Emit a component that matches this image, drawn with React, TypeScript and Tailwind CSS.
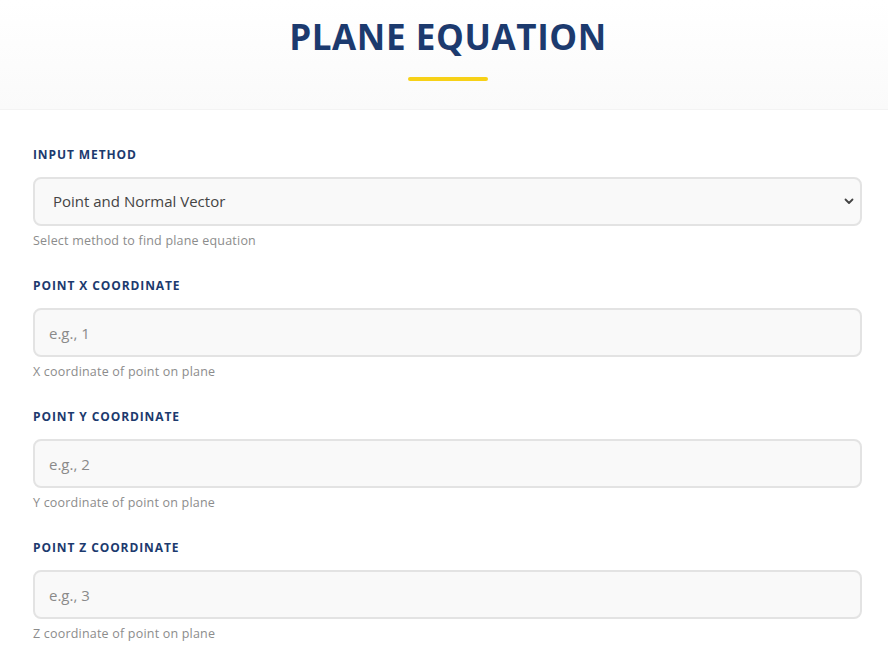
import { useState } from 'react';

const fields = [
  { label: 'Point X Coordinate', placeholder: 'e.g., 1', help: 'X coordinate of point on plane' },
  { label: 'Point Y Coordinate', placeholder: 'e.g., 2', help: 'Y coordinate of point on plane' },
  { label: 'Point Z Coordinate', placeholder: 'e.g., 3', help: 'Z coordinate of point on plane' },
];

function Label({ children }: { children: React.ReactNode }) {
  return (
    <label className="block text-[12px] leading-4 font-bold uppercase tracking-[0.9px] text-[#1c3a6e]">
      {children}
    </label>
  );
}

function Help({ children }: { children: React.ReactNode }) {
  return <p className="mt-[7px] text-[12.5px] leading-4 tracking-[0.2px] text-[#8c8c8c]">{children}</p>;
}

export default function App() {
  const [method, setMethod] = useState('point-normal');
  const [values, setValues] = useState<Record<string, string>>({});

  return (
    <div className="min-h-[660px] bg-white font-['Open_Sans',sans-serif]">
      <header className="h-[110px] border-b border-[#f3f3f3] bg-gradient-to-b from-white to-[#fafafa] pl-[8px] pt-[14px] text-center">
        <h1 className="text-[35px] leading-[46px] font-bold tracking-[0.6px] text-[#1c3a6e]">PLANE EQUATION</h1>
        <div className="mx-auto mt-[17px] h-[4px] w-[80px] rounded-full bg-[#f7d117]" />
      </header>

      <main className="pl-[33px] pr-[26px] pt-[37px]">
        <div>
          <Label>Input method</Label>
          <div className="relative mt-[14px]">
            <select
              value={method}
              onChange={(e) => setMethod(e.target.value)}
              className="h-[49px] w-full appearance-none rounded-[8px] border-2 border-[#e3e3e3] bg-[#f9f9f9] pl-[18px] text-[15px] text-[#444] outline-none"
            >
              <option value="point-normal">Point and Normal Vector</option>
              <option value="three-points">Three Points</option>
            </select>
            <svg
              className="pointer-events-none absolute right-[8px] top-[21px]"
              width="10"
              height="7"
              viewBox="0 0 10 7"
              fill="none"
            >
              <path d="M1.5 1.5 5 5l3.5-3.5" stroke="#444" strokeWidth="1.8" strokeLinecap="round" strokeLinejoin="round" />
            </svg>
          </div>
          <Help>Select method to find plane equation</Help>
        </div>

        {fields.map((f) => (
          <div key={f.label} className="mt-[29px]">
            <Label>{f.label}</Label>
            <input
              type="text"
              placeholder={f.placeholder}
              value={values[f.label] ?? ''}
              onChange={(e) => setValues({ ...values, [f.label]: e.target.value })}
              className="mt-[14px] block h-[49px] w-full rounded-[8px] border-2 border-[#e3e3e3] bg-[#f9f9f9] pl-[14px] text-[15px] text-[#444] outline-none placeholder:text-[#8a8a8a]"
            />
            <Help>{f.help}</Help>
          </div>
        ))}
      </main>
    </div>
  );
}
